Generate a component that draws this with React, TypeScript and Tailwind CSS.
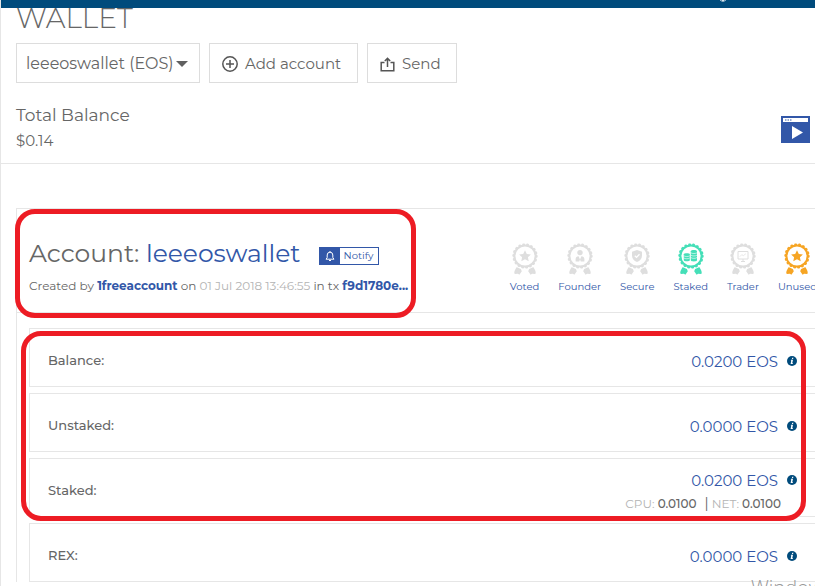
import type { ReactNode } from "react";
import { Globe } from "lucide-react";

type BadgeInfo = { label: string; color: string; glyph: ReactNode };

const star = (
  <path d="M13 7.2l1.8 3.7 4.1.5-3 2.8.8 4.1-3.7-2-3.7 2 .8-4.1-3-2.8 4.1-.5z" />
);

const badges: BadgeInfo[] = [
  { label: "Voted", color: "text-[#dedede]", glyph: star },
  {
    label: "Founder",
    color: "text-[#dedede]",
    glyph: (
      <>
        <circle cx="13" cy="9.6" r="2.7" />
        <path d="M8.6 18.6v-2.4c0-1.9 1.2-2.9 3-3l1.4 3.4 1.4-3.4c1.8.1 3 1.1 3 3v2.4h-3.6L13 16.4l-.8 2.2z" />
      </>
    ),
  },
  {
    label: "Secure",
    color: "text-[#dedede]",
    glyph: (
      <>
        <path d="M13 7l5 1.7v3.8c0 3.2-2 5.3-5 6.5-3-1.2-5-3.3-5-6.5V8.7z" />
        <path d="M10.8 12.8l1.7 1.6 3-3.2" fill="none" stroke="white" strokeWidth="1.3" />
      </>
    ),
  },
  {
    label: "Staked",
    color: "text-[#45dfb8]",
    glyph: (
      <>
        <path d="M12.8 8.2c0-1.6 6.2-1.6 6.2 0v9c0 1.6-6.2 1.6-6.2 0z" />
        <path d="M5.8 11.2c0-1.2 6-1.2 6 0v6c0 1.3-6 1.3-6 0z" />
        <path
          d="M12.8 9.8c1.5 1 4.7 1 6.2 0M12.8 12.2c1.5 1 4.7 1 6.2 0M12.8 14.6c1.5 1 4.7 1 6.2 0M5.8 12.8c1.5 1 4.5 1 6 0M5.8 15c1.5 1 4.5 1 6 0"
          fill="none"
          stroke="white"
          strokeWidth="0.6"
        />
      </>
    ),
  },
  {
    label: "Trader",
    color: "text-[#dedede]",
    glyph: (
      <>
        <path d="M8 8.5h10V16H8zM11 18.5h4M13 16v2" fill="none" stroke="currentColor" />
        <path d="M9.8 13.7l2-2 1.5 1 2.6-2" fill="none" stroke="currentColor" strokeWidth="0.7" />
      </>
    ),
  },
  { label: "Unused", color: "text-[#f6a524]", glyph: star },
];

function Medal({ color, children }: { color: string; children: ReactNode }) {
  return (
    <svg viewBox="0 0 26 32" className={`h-8 w-[26px] ${color}`} fill="currentColor" aria-hidden="true">
      <circle cx="13" cy="13" r="10.6" fill="none" stroke="currentColor" strokeWidth="2" />
      <circle
        cx="13"
        cy="13"
        r="11.46"
        fill="none"
        stroke="currentColor"
        strokeWidth="2.4"
        strokeLinecap="round"
        strokeDasharray="0.6 3.4"
      />
      <path d="M4.500 24.300c1.800.200 2.600 1.400 4.400 1.600l.900 2.300-2.400 3.600-1.500-1.100-3.200.400c-1.200-1.700.300-4.300 1.800-6.800z" />
      <path d="M21.500 24.300c-1.800.200-2.600 1.400-4.400 1.600l-.900 2.300 2.400 3.600 1.500-1.100 3.200.400c1.200-1.700-.300-4.300-1.800-6.800z" />
      {children}
    </svg>
  );
}

function InfoButton({ label }: { label: string }) {
  return (
    <button type="button" aria-label={`About ${label}`} className="shrink-0 pb-0.5">
      <svg viewBox="0 0 10 10" className="size-[10px]" aria-hidden="true">
        <circle cx="5" cy="5" r="5" fill="#004b7c" />
        <path d="M5.2 1.7h1.2l-.3 1.2H4.9zM4 3.7h2L5.3 7h.6l-.2.9H3.6l.7-3.3h-.5z" fill="white" />
      </svg>
    </button>
  );
}

function BalanceRow({ label, amount, children }: { label: string; amount: string; children?: ReactNode }) {
  return (
    <div className="flex h-[59px] items-center justify-between border border-r-0 border-[#e6e6e6] pt-1.5 pr-[18px] pl-[18px]">
      <dt className="text-[13px] font-medium">{label}:</dt>
      <dd className="pt-0.5 leading-6">
        <div className="flex items-center justify-end gap-[9px]">
          <span className="text-[15px] text-[#3257a8]">{amount} EOS</span>
          <InfoButton label={label} />
        </div>
        {children}
      </dd>
    </div>
  );
}

export default function App() {
  return (
    <div className="relative h-screen overflow-hidden border-l border-[#e6e6e6] bg-white font-['Montserrat','Inter','Open_Sans',sans-serif] text-[#666]">
      <header className="relative z-10 -ml-px flex h-2 items-end justify-end overflow-hidden bg-[#004b7c] pr-[87px] pb-1.5">
        <Globe className="size-[10px] shrink-0 text-white" strokeWidth={2} />
      </header>

      <section className="border-b border-[#e6e6e6] pr-[5px] pb-2 pl-[15px]">
        <h1 className="-mt-1.5 mb-[9px] text-[28px] leading-8 font-light">WALLET</h1>
        <div className="flex gap-[9px] leading-6">
          <div className="relative">
            <select
              aria-label="Wallet account"
              className="h-10 w-[184px] appearance-none rounded-none border border-[#ddd] bg-white pt-0.5 pl-[9px] text-base"
            >
              <option>leeeoswallet (EOS)</option>
            </select>
            <svg viewBox="0 0 12 6" className="pointer-events-none absolute top-[18px] right-3 h-1.5 w-3" aria-hidden="true">
              <path d="M0 0h12L6 6z" fill="#606060" />
            </svg>
          </div>
          <button type="button" className="flex h-10 w-[149px] items-center gap-[7px] border border-[#ddd] pt-0.5 pl-3 text-[15px]">
            <svg viewBox="0 0 16 16" className="size-4" fill="none" stroke="#555" strokeWidth="1.5" aria-hidden="true">
              <circle cx="8" cy="8" r="7.2" />
              <path d="M8 4v8M4 8h8" />
            </svg>
            Add account
          </button>
          <button type="button" className="flex h-10 w-[90px] items-center gap-[7px] border border-[#ddd] pt-0.5 pl-3 text-[15px]">
            <svg viewBox="0 0 15 15" className="size-[15px]" fill="none" stroke="#555" strokeWidth="1.5" aria-hidden="true">
              <path d="M4.5 5.5H1.2v8.2h12.6V5.5h-3.3M7.500 10V1.500M4.800 4l2.700-2.700L10.200 4" />
            </svg>
            Send
          </button>
        </div>
        <div className="mt-5 flex items-center justify-between">
          <div>
            <p className="text-[17px] leading-6">Total Balance</p>
            <p className="text-[15px] leading-7">$0.14</p>
          </div>
          <button type="button" aria-label="Watch the video guide">
            <svg viewBox="0 0 29 27" className="h-[27px] w-[29px]" aria-hidden="true">
              <path d="M0 0h29v27H0z" fill="#3257a8" />
              <path d="M2 2h25v4H2zM11 10l11 6.5-11 6.5z" fill="white" />
              <path d="M4 3.5h1.500v1H4zM6.500 3.500H8v1H6.500zM9 3.500h1.500v1H9z" fill="#3257a8" />
            </svg>
          </button>
        </div>
      </section>

      <section className="mt-[44px] ml-[15px] border-t border-l border-[#e6e6e6]">
        <div className="flex h-[104px] items-start justify-between border-b border-[#e6e6e6] pl-3">
          <div className="pt-7">
            <div className="flex items-center gap-[18px]">
              <h2 className="text-[25px] leading-8 whitespace-nowrap">
                Account:{" "}
                <a href="#account" className="text-[#3257a8]">
                  leeeoswallet
                </a>
              </h2>
              <button
                type="button"
                className="mt-1.5 flex h-[18px] w-[60px] items-stretch border border-[#3257a8] text-[10px] leading-4 text-[#3257a8]"
              >
                <span className="flex w-5 shrink-0 items-center justify-center bg-[#3257a8]">
                  <svg viewBox="0 0 10 10" className="size-[10px]" fill="none" stroke="white" aria-hidden="true">
                    <path d="M1 8.2h8L7.8 6.5V4a2.8 2.8 0 0 0-5.6 0v2.5zM4 9.5h2M5 0v1" />
                  </svg>
                </span>
                <span className="flex-1 text-center">Notify</span>
              </button>
            </div>
            <p className="mt-[5px] text-[12px] leading-6 whitespace-nowrap">
              Created by{" "}
              <a href="#creator" className="font-bold text-[#3257a8]">
                1freeaccount
              </a>{" "}
              on <time className="text-[#b4b4b4]">01 Jul 2018 13:46:55</time> in tx{" "}
              <a href="#transaction" className="font-bold text-[#3257a8]">
                f9d1780e...
              </a>
            </p>
          </div>
          <ul className="-mr-0.5 flex gap-[19px] pt-[34px] text-[10px] leading-4 text-[#3257a8]">
            {badges.map((badge) => (
              <li key={badge.label} className="flex flex-col items-center gap-1">
                <Medal color={badge.color}>{badge.glyph}</Medal>
                <a href="#badges">{badge.label}</a>
              </li>
            ))}
          </ul>
        </div>

        <dl className="flex flex-col gap-1.5 pt-[15px] pl-3">
          <BalanceRow label="Balance" amount="0.0200" />
          <BalanceRow label="Unstaked" amount="0.0000" />
          <BalanceRow label="Staked" amount="0.0200">
            <p className="pr-4 text-right text-[12px] leading-[22px]">
              <span className="text-[#b4b4b4]">CPU:</span> <span className="font-medium">0.0100</span>
              <span className="pl-2 text-sm">|</span> <span className="text-[#b4b4b4]">NET:</span>{" "}
              <span className="font-medium">0.0100</span>
            </p>
          </BalanceRow>
          <BalanceRow label="REX" amount="0.0000" />
        </dl>
      </section>

      <div className="pointer-events-none absolute top-[209px] left-3.5 h-[109px] w-[401px] rounded-[20px] border-[5px] border-[#ed1c24]" />
      <div className="pointer-events-none absolute top-[331px] right-[9px] left-5 h-[190px] rounded-[20px] border-[5px] border-[#ed1c24]" />
      <p className="pointer-events-none absolute top-[576px] left-[750px] font-['Open_Sans',sans-serif] text-xl leading-6 font-light text-[#999]">
        Windows
      </p>
    </div>
  );
}
